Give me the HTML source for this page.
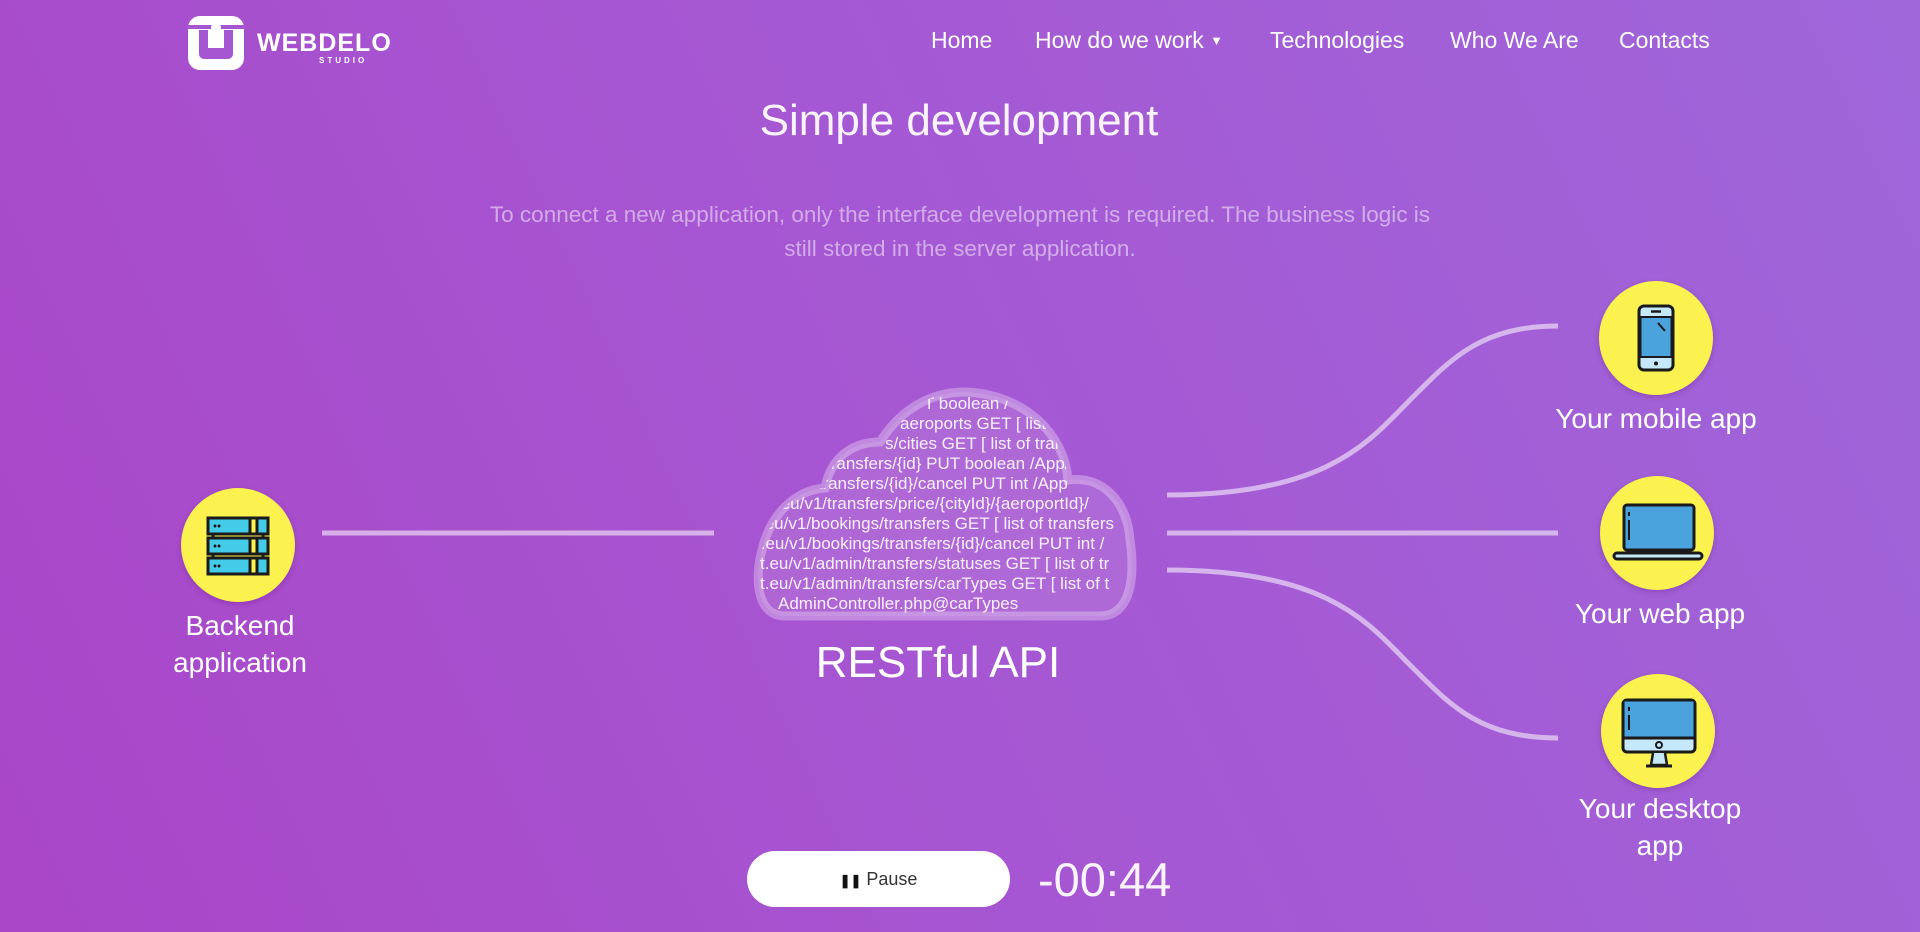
<!DOCTYPE html>
<html><head><meta charset="utf-8">
<style>
html,body{margin:0;padding:0;}
body{width:1920px;height:932px;overflow:hidden;position:relative;font-family:"Liberation Sans",sans-serif;color:#fff;
background:linear-gradient(65deg,#a946c8 0%,#a656d2 45%,#9f66da 100%);}
.abs{position:absolute;}
.nav a{position:absolute;top:27px;font-size:23px;color:#fff;text-decoration:none;white-space:nowrap;}
.circle{position:absolute;width:114px;height:114px;border-radius:50%;background:#fbf250;box-shadow:0 2px 6px rgba(80,0,100,.25);}
.lbl{position:absolute;font-size:28px;text-align:center;line-height:37px;width:260px;}
</style></head><body>
<!-- logo -->
<svg class="abs" style="left:186px;top:14px" width="60" height="58" viewBox="0 0 60 58">
<path d="M14 2 H46 A12 12 0 0 1 58 14 V44 A12 12 0 0 1 46 56 H14 A12 12 0 0 1 2 44 V14 A12 12 0 0 1 14 2 Z" fill="#fff"/>
<path d="M13 16 V40 A5 5 0 0 0 18 45 H42 A5 5 0 0 0 47 40 V16 H38 V34 H22 V16 Z" fill="#a655d1"/>
<rect x="0" y="11" width="60" height="4" fill="#a655d1"/>
<rect x="25" y="11" width="10" height="20" rx="2" fill="#fff"/>
</svg>
<div class="abs" style="left:257px;top:29px;font-size:25px;font-weight:bold;letter-spacing:1px;">WEBDELO</div>
<div class="abs" style="left:319px;top:56px;font-size:8px;font-weight:bold;letter-spacing:3px;">STUDIO</div>
<div class="nav">
<a style="left:931px">Home</a>
<a style="left:1035px">How do we work <span style="font-size:13px;vertical-align:3px">▼</span></a>
<a style="left:1270px">Technologies</a>
<a style="left:1450px">Who We Are</a>
<a style="left:1619px">Contacts</a>
</div>
<div class="abs" style="left:0;width:1918px;text-align:center;top:96px;font-size:44px;color:rgba(255,255,255,.93);">Simple development</div>
<div class="abs" style="left:400px;width:1120px;text-align:center;top:198px;font-size:22.5px;line-height:34px;color:rgba(255,255,255,.5);">To connect a new application, only the interface development is required. The business logic is<br>still stored in the server application.</div>

<!-- lines -->
<svg class="abs" style="left:0;top:0" width="1920" height="932">
<g stroke="rgba(255,255,255,.55)" stroke-width="5" fill="none">
<line x1="322" y1="533" x2="714" y2="533"/>
<line x1="1167" y1="533" x2="1558" y2="533"/>
<path d="M1167 495 C1330 495 1370 440 1410 400 C1450 360 1480 326 1558 326"/>
<path d="M1167 570 C1330 570 1370 625 1410 665 C1450 705 1480 738 1558 738"/>
</g>
</svg>

<!-- cloud -->
<svg class="abs" style="left:740px;top:380px" width="420" height="250" viewBox="0 0 420 250">
<defs><clipPath id="cc"><path d="M45 236 C15 236 15 195 22 170 C30 135 55 110 85 108 C90 80 110 62 140 62 C160 30 190 12 225 12 C285 14 325 55 328 100 C365 95 388 125 390 160 C395 195 392 236 360 236 Z"/></clipPath></defs>
<path d="M45 236 C15 236 15 195 22 170 C30 135 55 110 85 108 C90 80 110 62 140 62 C160 30 190 12 225 12 C285 14 325 55 328 100 C365 95 388 125 390 160 C395 195 392 236 360 236 Z" fill="rgba(255,255,255,.1)" stroke="rgba(255,255,255,.3)" stroke-width="9"/>
<g clip-path="url(#cc)" fill="rgba(255,255,255,.9)" font-family="Liberation Sans,sans-serif" font-size="17">
<text x="184" y="29">T boolean /</text>
<text x="160" y="49">aeroports GET [ list</text>
<text x="145" y="69">s/cities GET [ list of tran</text>
<text x="86" y="89">transfers/{id} PUT boolean /App/</text>
<text x="73" y="109">/transfers/{id}/cancel PUT int /App</text>
<text x="36" y="129">.eu/v1/transfers/price/{cityId}/{aeroportId}/</text>
<text x="20" y="149">.eu/v1/bookings/transfers GET [ list of transfers</text>
<text x="16" y="169">t.eu/v1/bookings/transfers/{id}/cancel PUT int /</text>
<text x="20" y="189">t.eu/v1/admin/transfers/statuses GET [ list of tr</text>
<text x="20" y="209">t.eu/v1/admin/transfers/carTypes GET [ list of t</text>
<text x="38" y="229">AdminController.php@carTypes</text>
</g>
</svg>
<div class="abs" style="left:738px;width:400px;text-align:center;top:638px;font-size:44px;">RESTful API</div>

<!-- backend -->
<div class="circle" style="left:181px;top:488px"></div>
<svg class="abs" style="left:205px;top:515px" width="66" height="62" viewBox="0 0 66 62">
<g stroke="#1a1a1a" stroke-width="3">
<line x1="8" y1="18" x2="8" y2="24"/><line x1="58" y1="18" x2="58" y2="24"/>
<line x1="8" y1="38" x2="8" y2="44"/><line x1="58" y1="38" x2="58" y2="44"/>
<rect x="3" y="3" width="60" height="16" fill="#44cbe8"/>
<rect x="3" y="23" width="60" height="16" fill="#44cbe8"/>
<rect x="3" y="43" width="60" height="16" fill="#44cbe8"/>
<rect x="45" y="3" width="7" height="16" fill="#fbf250"/>
<rect x="45" y="23" width="7" height="16" fill="#fbf250"/>
<rect x="45" y="43" width="7" height="16" fill="#fbf250"/>
</g>
<g fill="#1a1a1a"><circle cx="10" cy="11" r="1.5"/><circle cx="14" cy="11" r="1.5"/><circle cx="10" cy="31" r="1.5"/><circle cx="14" cy="31" r="1.5"/><circle cx="10" cy="51" r="1.5"/><circle cx="14" cy="51" r="1.5"/></g>
</svg>
<div class="lbl" style="left:110px;top:607px">Backend<br>application</div>

<!-- mobile -->
<div class="circle" style="left:1599px;top:281px"></div>
<svg class="abs" style="left:1636px;top:303px" width="40" height="70" viewBox="0 0 40 70">
<rect x="3" y="3" width="34" height="64" rx="5" fill="#c6e8fb" stroke="#1a1a1a" stroke-width="3"/>
<rect x="4.5" y="14" width="31" height="40" fill="#4aa3dd" stroke="#1a1a1a" stroke-width="2"/>
<line x1="15" y1="8.5" x2="25" y2="8.5" stroke="#1a1a1a" stroke-width="2.5"/>
<circle cx="20" cy="60.5" r="2" fill="#1a1a1a"/>
<line x1="22" y1="20" x2="29" y2="28" stroke="#1a1a1a" stroke-width="2"/>
</svg>
<div class="lbl" style="left:1526px;top:400px">Your mobile app</div>

<!-- web -->
<div class="circle" style="left:1600px;top:476px"></div>
<svg class="abs" style="left:1612px;top:502px" width="92" height="62" viewBox="0 0 92 62">
<rect x="12" y="3" width="70" height="45" rx="3" fill="#4aa3dd" stroke="#1a1a1a" stroke-width="3"/>
<line x1="17" y1="10" x2="17" y2="14" stroke="#1a1a1a" stroke-width="2"/>
<line x1="17" y1="18" x2="17" y2="38" stroke="#1a1a1a" stroke-width="2"/>
<rect x="2" y="51" width="88" height="6" rx="3" fill="#c6e8fb" stroke="#1a1a1a" stroke-width="3"/>
</svg>
<div class="lbl" style="left:1530px;top:595px">Your web app</div>

<!-- desktop -->
<div class="circle" style="left:1601px;top:674px"></div>
<svg class="abs" style="left:1620px;top:697px" width="78" height="74" viewBox="0 0 78 74">
<rect x="3" y="3" width="72" height="52" rx="4" fill="#c6e8fb" stroke="#1a1a1a" stroke-width="3"/>
<rect x="4.5" y="4.5" width="69" height="36" fill="#4aa3dd"/>
<line x1="3" y1="41" x2="75" y2="41" stroke="#1a1a1a" stroke-width="3"/>
<circle cx="39" cy="48" r="3" fill="none" stroke="#1a1a1a" stroke-width="2"/>
<line x1="9" y1="10" x2="9" y2="14" stroke="#1a1a1a" stroke-width="2"/>
<line x1="9" y1="18" x2="9" y2="33" stroke="#1a1a1a" stroke-width="2"/>
<path d="M33 56 L31 68 H47 L45 56" fill="#c6e8fb" stroke="#1a1a1a" stroke-width="2.5"/>
<line x1="26" y1="69" x2="52" y2="69" stroke="#1a1a1a" stroke-width="3"/>
</svg>
<div class="lbl" style="left:1530px;top:790px">Your desktop<br>app</div>

<!-- controls -->
<div class="abs" style="left:747px;top:851px;width:263px;height:56px;border-radius:28px;background:#fff;color:#333;font-size:18px;text-align:center;line-height:56px;"><span style="font-weight:bold;font-size:13px;color:#111">❚❚</span> Pause</div>
<div class="abs" style="left:1038px;top:852px;font-size:47px;color:rgba(255,255,255,.93);">-00:44</div>
</body></html>
